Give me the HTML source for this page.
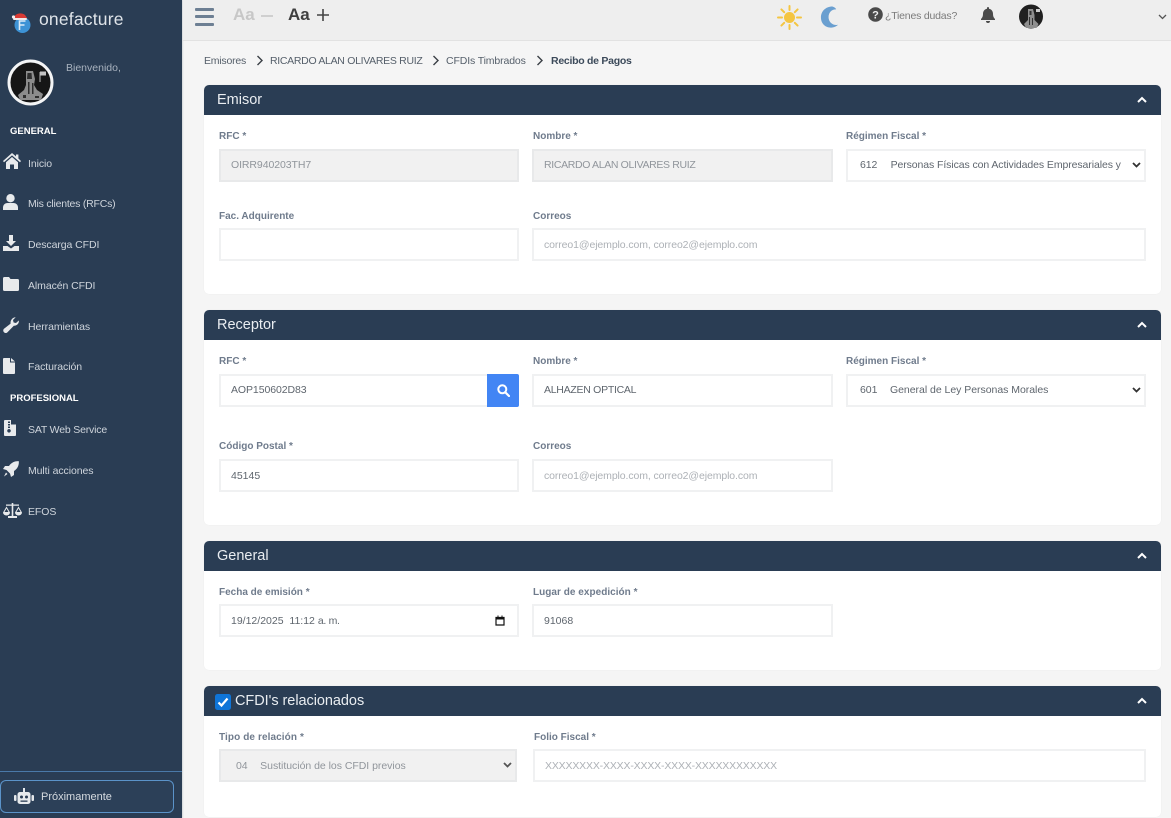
<!DOCTYPE html>
<html lang="es"><head><meta charset="utf-8"><title>Recibo de Pagos</title>
<style>
*{box-sizing:border-box}
html,body{margin:0;padding:0;width:1171px;height:818px;overflow:hidden;background:#f5f5f5;font-family:"Liberation Sans",sans-serif;position:relative}
.a{position:absolute;white-space:nowrap}
#side{position:absolute;left:0;top:0;width:182px;height:818px;background:#2a3d54;box-shadow:1px 0 1px #d5d8da}
#top{position:absolute;left:183px;top:0;width:988px;height:41px;background:#eeeeee;border-bottom:1px solid #e2e2e2}
.nav{position:absolute;left:28px;font-size:10.5px;color:#cfd5dc;line-height:14px;white-space:nowrap;letter-spacing:-.08px}
.sec{position:absolute;left:10px;font-size:9.5px;font-weight:bold;color:#fff;line-height:12px}
.ic{position:absolute;fill:#e8eaec}
.card{position:absolute;left:204px;width:957px;background:#fff;border-radius:5px;box-shadow:0 0 1px #e6e6e6}
.hd{position:absolute;left:0;top:0;width:957px;height:30px;background:#2a3d54;border-radius:5px 5px 0 0;color:#e9edf1;font-size:14.5px;line-height:30px;padding-left:13px}
.ch{position:absolute;left:933px;top:11px}
.lb{position:absolute;font-size:10px;font-weight:bold;color:#6f7b8c;line-height:12px;white-space:nowrap}
.in{position:absolute;height:33px;background:#fff;border:2px solid #f0f1f2;font-size:10.5px;color:#5f666e;line-height:29px;padding-left:10px;white-space:nowrap;overflow:hidden}
.dis{background:#f1f1f1;border-color:#e8e9ea;color:#90959b}
.ph{color:#adb1b6}
.sel svg{position:absolute;right:3px;top:11px}
.bc{position:absolute;top:54px;font-size:10.5px;line-height:14px;color:#555f6a;white-space:nowrap}
</style></head><body>
<div id="side">
 <svg class="a" style="left:11px;top:11px" width="22" height="24" viewBox="0 0 22 24"><circle cx="11.500" cy="14" r="8" fill="#3d93d6"/><path d="M8.500 19V10h6M8.500 14h5" stroke="#dcebf7" stroke-width="1.600" fill="none"/><path d="M2 8C4 2 10 1 14 4l2 3-14 1z" fill="#d93a34"/><rect x="2" y="7" width="14" height="2" rx="1" fill="#f1e8e8"/><circle cx="2.500" cy="6" r="1.600" fill="#f2eeee"/></svg>
 <div class="a" style="left:39px;top:8px;font-size:17.5px;line-height:22px;color:#dfe4e9;letter-spacing:.2px">onefacture</div>
 <svg class="a" style="left:7px;top:59px" width="47" height="47" viewBox="0 0 47 47"><circle cx="23.500" cy="23.500" r="21.500" fill="#161616" stroke="#f4f5f6" stroke-width="3"/><path d="M19 12h7l2 8-1 6 3 5 6 4-2 6H13l-2-5 6-5 2-5z" fill="#8c8c8c"/><path d="M20.500 14h4l.5 6h-5zM21 23h1.500v12H21zM25 24h1.500v11H25zM16 36h3v3h-3zM28 37h4v2h-4z" fill="#2e2e2e"/><path d="M33 13v10" stroke="#bbb"/><path d="M33 12.500h6v4h-6z" fill="#c4c4c4"/></svg>
 <div class="a" style="left:66px;top:62px;font-size:10.5px;line-height:13px;color:#a9b3bf">Bienvenido,</div>
 <div class="sec" style="top:126px">GENERAL</div>
 <svg class="ic" style="left:3px;top:153px" width="18" height="16" viewBox="0 0 18 16"><path d="M9 0l4 3.400V1.500h2.400v4L18 8l-1 1.200-8-6.800-8 6.800L0 8zM3 9.200L9 4l6 5.200V16h-4v-4.500H7V16H3z"/></svg>
 <div class="nav" style="top:157px">Inicio</div>
 <svg class="ic" style="left:3px;top:194px" width="15" height="16" viewBox="0 0 15 16"><circle cx="7.500" cy="4.200" r="4.200"/><path d="M0 16v-2.500C0 10.500 2.500 9 4.500 9h6c2 0 4.500 1.500 4.500 4.500V16z"/></svg>
 <div class="nav" style="top:197px;letter-spacing:-.22px">Mis clientes (RFCs)</div>
 <svg class="ic" style="left:3px;top:235px" width="16" height="16" viewBox="0 0 16 16"><path d="M6 0h4v6h3l-5 5-5-5h3zM0 11h4.500L8 13.500 11.500 11H16v5H0z"/></svg>
 <div class="nav" style="top:238px">Descarga CFDI</div>
 <svg class="ic" style="left:3px;top:277px" width="16" height="14" viewBox="0 0 16 14"><path d="M1.500 0h4.500l1.500 2h7A1.500 1.500 0 0 1 16 3.500v9A1.500 1.500 0 0 1 14.500 14h-13A1.500 1.500 0 0 1 0 12.500v-11A1.500 1.500 0 0 1 1.500 0z"/></svg>
 <div class="nav" style="top:279px">Almacén CFDI</div>
 <svg class="ic" style="left:3px;top:317px" width="16" height="16" viewBox="0 0 16 16"><path d="M15.800 3.500c.5 2.500-1.500 5.500-5 5.200L4.500 15.300c-1 1-2.500 1-3.500 0s-1-2.500 0-3.500l6.600-5.200C7 3 10 .2 12.700.2L10 3l.6 2.500L13 6z"/></svg>
 <div class="nav" style="top:320px">Herramientas</div>
 <svg class="ic" style="left:3px;top:358px" width="12" height="16" viewBox="0 0 12 16"><path d="M1 0h6v4.500h5V15a1 1 0 0 1-1 1H1a1 1 0 0 1-1-1V1a1 1 0 0 1 1-1zM8 0l4 3.500H8z"/></svg>
 <div class="nav" style="top:360px">Facturación</div>
 <div class="sec" style="top:393px">PROFESIONAL</div>
 <svg class="ic" style="left:4px;top:420px" width="12" height="16" viewBox="0 0 12 16"><path fill-rule="evenodd" d="M1 0h6v4.500h5V15a1 1 0 0 1-1 1H1a1 1 0 0 1-1-1V1a1 1 0 0 1 1-1zM4 1.500v1.500h2V1.500zm0 2.500v1.500h2V4zm0 2.500V8h2V6.500zM5 9a1.800 1.800 0 1 0 .01 0z"/></svg>
 <div class="nav" style="top:423px;letter-spacing:-.18px">SAT Web Service</div>
 <svg class="ic" style="left:3px;top:461px" width="16" height="16" viewBox="0 0 16 16"><path d="M15.800.2c.4 4-1.300 7.500-4.800 9.800v4l-3 2-1-3.500L3.500 9 0 8l2-3h4C8.500 1.500 12 0 15.800.2zM3 11.500l1.500 1.500L1 15.500z"/></svg>
 <div class="nav" style="top:464px">Multi acciones</div>
 <svg class="ic" style="left:3px;top:503px" width="19" height="15" viewBox="0 0 19 15"><path d="M8.700 0h1.600v1.500H16v1.300h-5.700V13H14v2H5v-2h3.700V2.800H3V1.500h5.700zM3.500 3.500L7 9.500a3.500 3 0 0 1-7 0zm0 2L1.500 9h4zM15.500 3.500L19 9.500a3.500 3 0 0 1-7 0zm0 2L13.500 9h4z"/></svg>
 <div class="nav" style="top:505px">EFOS</div>
 <div class="a" style="left:0;top:771px;width:182px;height:1px;background:#4a79a8"></div>
 <div class="a" style="left:0;top:780px;width:174px;height:33px;border:1px solid #5b93c9;border-radius:6px;background:#2c4058"></div>
 <svg class="a" style="left:14px;top:788px" width="20" height="17" viewBox="0 0 20 17"><rect x="3.500" y="4" width="13" height="12" rx="2.500" fill="#e6e9ec"/><rect x="0" y="7" width="2.500" height="6" rx="1" fill="#e6e9ec"/><rect x="17.500" y="7" width="2.500" height="6" rx="1" fill="#e6e9ec"/><rect x="9" y="0" width="2" height="4" fill="#e6e9ec"/><circle cx="7.500" cy="9" r="1.500" fill="#2a3d54"/><circle cx="12.500" cy="9" r="1.500" fill="#2a3d54"/><rect x="6.500" y="12.500" width="7" height="1.300" fill="#2a3d54"/></svg>
 <div class="a" style="left:41px;top:790px;font-size:11px;line-height:14px;color:#d6dbe0">Próximamente</div>
</div>
<div id="top">
 <svg class="a" style="left:12px;top:8px" width="19" height="18" viewBox="0 0 19 18"><rect width="19" height="3" rx="1" fill="#6d7f93" y="0"/><rect width="19" height="3" rx="1" fill="#6d7f93" y="7"/><rect width="19" height="3" rx="1" fill="#6d7f93" y="15"/></svg>
 <div class="a" style="left:50px;top:5px;font-size:17px;font-weight:bold;line-height:20px;color:#c7c7c7">Aa</div>
 <div class="a" style="left:78px;top:15px;width:12px;height:2px;background:#cfcfcf"></div>
 <div class="a" style="left:105px;top:5px;font-size:17px;font-weight:bold;line-height:20px;color:#3f3f3f">Aa</div>
 <svg class="a" style="left:134px;top:9px" width="12" height="12"><path d="M6 0v12M0 6h12" stroke="#444" stroke-width="1.600"/></svg>
 <svg class="a" style="left:594px;top:5px" width="25" height="25" viewBox="0 0 25 25"><circle cx="12.500" cy="12.500" r="5.500" fill="#f4c542"/><path d="M12.500 1v4M12.500 20v4M1 12.500h4M20 12.500h4M4.400 4.400l2.800 2.800M17.800 17.800l2.800 2.800M4.400 20.600l2.800-2.800M17.800 7.200l2.800-2.800" stroke="#f4c542" stroke-width="2" stroke-linecap="round"/></svg>
 <svg class="a" style="left:637px;top:5px" width="19" height="24" viewBox="0 0 20 24"><path d="M13 1C6 1 1 6 1 12.500S6 24 13 23c2.500-.3 4.500-1.300 6-2.800-5 1-10-2.500-10-8s4-8.500 8-8.200C16.500 2.500 15 1.500 13 1z" fill="#6a9fd0"/></svg>
 <svg class="a" style="left:685px;top:7px" width="15" height="15" viewBox="0 0 15 15"><circle cx="7.500" cy="7.500" r="7.300" fill="#4a4a4a"/><text x="7.500" y="11.300" text-anchor="middle" font-family="Liberation Sans" font-weight="bold" font-size="11" fill="#eee">?</text></svg>
 <div class="a" style="left:702px;top:9px;font-size:10.5px;line-height:14px;color:#7b7b7b;letter-spacing:-.2px">¿Tienes dudas?</div>
 <svg class="a" style="left:798px;top:7px" width="14" height="16" viewBox="0 0 14 16"><path d="M7 0a1 1 0 0 1 1 1v.8c2.500.5 4 2.500 4 5 0 3 1 4.200 2 5.200v1H0v-1c1-1 2-2.200 2-5.200 0-2.500 1.500-4.500 4-5V1a1 1 0 0 1 1-1zM5 14h4a2 2 0 0 1-4 0z" fill="#4a4a4a"/></svg>
 <svg class="a" style="left:836px;top:4px" width="24" height="25" viewBox="0 0 24 25"><circle cx="12" cy="12.500" r="12" fill="#202020"/><path d="M9 5h5l1.500 6v5l4 4-2 4H7l-2-4 4-4v-5z" fill="#8f8f8f"/><path d="M10.500 7h2v4h-2zM10 13h1v8h-1zM13 14h1v7h-1z" fill="#333"/><path d="M17 5h4v3h-4z" fill="#ccc"/></svg>
 <svg class="a" style="left:975px;top:14px" width="9" height="6"><path d="M1 1l3.500 3.500L8 1" stroke="#555" stroke-width="1.300" fill="none"/></svg>
</div>
<div class="bc" style="left:204px;letter-spacing:-.22px">Emisores</div>
<svg class="a" style="left:256px;top:55px" width="8" height="11"><path d="M1.500 1l4.500 4.500L1.500 10" stroke="#3a3f45" stroke-width="1.400" fill="none"/></svg>
<div class="bc" style="left:270px;letter-spacing:-.3px">RICARDO ALAN OLIVARES RUIZ</div>
<svg class="a" style="left:432px;top:55px" width="8" height="11"><path d="M1.500 1l4.500 4.500L1.500 10" stroke="#3a3f45" stroke-width="1.400" fill="none"/></svg>
<div class="bc" style="left:446px;letter-spacing:-.13px">CFDIs Timbrados</div>
<svg class="a" style="left:536px;top:55px" width="8" height="11"><path d="M1.500 1l4.500 4.500L1.500 10" stroke="#3a3f45" stroke-width="1.400" fill="none"/></svg>
<div class="bc" style="left:551px;font-weight:bold;color:#3c4a5a;letter-spacing:-.27px">Recibo de Pagos</div>

<div class="card" style="top:85px;height:209px"><div class="hd">Emisor</div><svg class="ch" width="10" height="7"><path d="M1 6l4-4 4 4" stroke="#fff" stroke-width="2" fill="none"/></svg></div>
<div class="lb" style="left:219px;top:131px">RFC *</div>
<div class="lb" style="left:533px;top:131px">Nombre *</div>
<div class="lb" style="left:846px;top:131px">Régimen Fiscal *</div>
<div class="in dis" style="left:219px;top:149px;width:300px;letter-spacing:-.08px">OIRR940203TH7</div>
<div class="in dis" style="left:532px;top:149px;width:301px;letter-spacing:-.34px">RICARDO ALAN OLIVARES RUIZ</div>
<div class="in sel" style="left:846px;top:149px;width:300px;padding-left:12px;letter-spacing:-.09px">612 &nbsp; &nbsp;<span style="margin-left:2px">Personas Físicas con Actividades Empresariales y</span><svg width="9" height="7"><path d="M1 1l3.500 3.500L8 1" stroke="#333" stroke-width="1.800" fill="none"/></svg></div>
<div class="lb" style="left:219px;top:211px">Fac. Adquirente</div>
<div class="lb" style="left:533px;top:211px">Correos</div>
<div class="in" style="left:219px;top:228px;width:300px"></div>
<div class="in ph" style="left:532px;top:228px;width:614px;letter-spacing:-.1px;line-height:31px">correo1@ejemplo.com, correo2@ejemplo.com</div>

<div class="card" style="top:310px;height:215px"><div class="hd">Receptor</div><svg class="ch" width="10" height="7"><path d="M1 6l4-4 4 4" stroke="#fff" stroke-width="2" fill="none"/></svg></div>
<div class="lb" style="left:219px;top:356px">RFC *</div>
<div class="lb" style="left:533px;top:356px">Nombre *</div>
<div class="lb" style="left:846px;top:356px">Régimen Fiscal *</div>
<div class="in" style="left:219px;top:374px;width:270px;letter-spacing:-.08px">AOP150602D83</div>
<div class="a" style="left:487px;top:374px;width:32px;height:33px;background:#4285f4;border-radius:0 2px 2px 0"></div>
<svg class="a" style="left:497px;top:384px" width="13" height="13" viewBox="0 0 13 13"><circle cx="5.300" cy="5.300" r="4" fill="none" stroke="#fff" stroke-width="2"/><path d="M8.300 8.300l3.700 3.700" stroke="#fff" stroke-width="2.200" stroke-linecap="round"/></svg>
<div class="in" style="left:532px;top:374px;width:301px;letter-spacing:-.27px">ALHAZEN OPTICAL</div>
<div class="in sel" style="left:846px;top:374px;width:300px;padding-left:12px;letter-spacing:-.03px">601 &nbsp; &nbsp;<span style="margin-left:1px">General de Ley Personas Morales</span><svg width="9" height="7"><path d="M1 1l3.500 3.500L8 1" stroke="#333" stroke-width="1.800" fill="none"/></svg></div>
<div class="lb" style="left:219px;top:441px">Código Postal *</div>
<div class="lb" style="left:533px;top:441px">Correos</div>
<div class="in" style="left:219px;top:459px;width:300px;line-height:31px">45145</div>
<div class="in ph" style="left:532px;top:459px;width:301px;letter-spacing:-.1px;line-height:31px">correo1@ejemplo.com, correo2@ejemplo.com</div>

<div class="card" style="top:541px;height:129px"><div class="hd">General</div><svg class="ch" width="10" height="7"><path d="M1 6l4-4 4 4" stroke="#fff" stroke-width="2" fill="none"/></svg></div>
<div class="lb" style="left:219px;top:587px">Fecha de emisión *</div>
<div class="lb" style="left:533px;top:587px;letter-spacing:.03px">Lugar de expedición *</div>
<div class="in" style="left:219px;top:604px;width:300px;padding-left:10px;line-height:31px">19/12/2025 &nbsp;11:12 <span style="letter-spacing:-.3px">a. m.</span></div>
<svg class="a" style="left:495px;top:615px" width="10" height="11" viewBox="0 0 10 11"><path d="M1 2.500h8v7.500H1z" fill="none" stroke="#111" stroke-width="1.200"/><rect x="1" y="2" width="8" height="2.500" fill="#111"/><path d="M3 .5v2M7 .5v2" stroke="#111"/></svg>
<div class="in" style="left:532px;top:604px;width:301px;line-height:31px">91068</div>

<div class="card" style="top:686px;height:131px"><div class="hd" style="padding-left:31px;letter-spacing:-.05px">CFDI's relacionados</div><svg class="ch" width="10" height="7"><path d="M1 6l4-4 4 4" stroke="#fff" stroke-width="2" fill="none"/></svg></div>
<svg class="a" style="left:215px;top:694px" width="16" height="16" viewBox="0 0 16 16"><rect width="16" height="16" rx="2.500" fill="#0f75d8"/><path d="M3.500 8.500l3 3 6-7" stroke="#fff" stroke-width="2.200" fill="none"/></svg>
<div class="lb" style="left:219px;top:732px;letter-spacing:.1px">Tipo de relación *</div>
<div class="lb" style="left:534px;top:732px">Folio Fiscal *</div>
<div class="in dis sel" style="left:219px;top:749px;width:298px;padding-left:15px;letter-spacing:-.03px;line-height:31px">04 &nbsp; &nbsp;<span style="margin-left:1px">Sustitución de los CFDI previos</span><svg width="9" height="7"><path d="M1 1l3.500 3.500L8 1" stroke="#555" stroke-width="1.800" fill="none"/></svg></div>
<div class="in ph" style="left:533px;top:749px;width:613px;letter-spacing:-.17px;line-height:31px">XXXXXXXX-XXXX-XXXX-XXXX-XXXXXXXXXXXX</div>
</body></html>
